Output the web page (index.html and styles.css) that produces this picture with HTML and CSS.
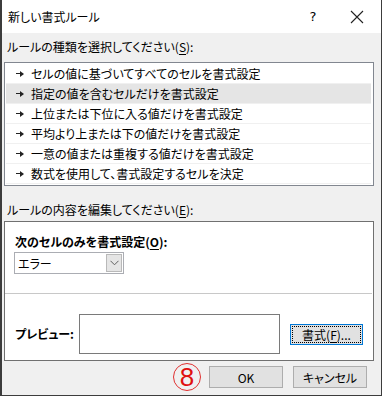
FILE: index.html
```html
<!DOCTYPE html>
<html lang="ja">
<head>
<meta charset="utf-8">
<link rel="stylesheet" href="styles.css">
</head>
<body>
<div class="dialog">
  <div class="titlebar">
    <span class="title">新しい書式ルール</span>
    <span class="help">?</span>
    <span class="close">
      <svg width="14" height="14" viewBox="0 0 14 14"><path d="M1 1 L13 13 M13 1 L1 13" stroke="#222" stroke-width="1.1" fill="none"/></svg>
    </span>
  </div>
  <div class="content">
    <div class="label">ルールの種類を選択してください(<u>S</u>):</div>
    <div class="list">
      <div class="row"><span class="arrow"></span>セルの値に基づいてすべてのセルを書式設定</div>
      <div class="row selected"><span class="arrow"></span>指定の値を含むセルだけを書式設定</div>
      <div class="row"><span class="arrow"></span>上位または下位に入る値だけを書式設定</div>
      <div class="row"><span class="arrow"></span>平均より上または下の値だけを書式設定</div>
      <div class="row"><span class="arrow"></span>一意の値または重複する値だけを書式設定</div>
      <div class="row"><span class="arrow"></span>数式を使用して、書式設定するセルを決定</div>
    </div>
    <div class="label label2">ルールの内容を編集してください(<u>E</u>):</div>
    <div class="panel">
      <div class="panel-top">
        <div class="bold">次のセルのみを書式設定(<u>O</u>):</div>
        <div class="select">
          <span class="select-text">エラー</span>
          <span class="select-btn">
            <svg width="9" height="6" viewBox="0 0 9 6"><path d="M0.5 0.8 L4.5 4.8 L8.5 0.8" stroke="#606060" stroke-width="1" fill="none"/></svg>
          </span>
        </div>
      </div>
      <div class="panel-bottom">
        <div class="bold preview-label">プレビュー:</div>
        <div class="preview-box"></div>
        <div class="btn format"><span class="focus">書式(<u>F</u>)...</span></div>
      </div>
    </div>
    <div class="footer">
      <span class="badge">8</span>
      <div class="btn">OK</div>
      <div class="btn">キャンセル</div>
    </div>
  </div>
</div>
</body>
</html>
```
FILE: styles.css
```css
* { box-sizing: border-box; }
html, body { margin: 0; padding: 0; background: #fff; }
body {
  font-family: "Noto Sans CJK JP", "Noto Sans", sans-serif;
  font-size: 12px;
  font-feature-settings: "palt";
  color: #000;
}
u { text-decoration-thickness: 1px; text-underline-offset: 2px; }
.dialog {
  width: 382px;
  height: 396px;
  border-left: 2px solid #3c3c3c;
  border-right: 1px solid #3c3c3c;
  border-bottom: 1px solid #3c3c3c;
  background: #f0f0f0;
}
.titlebar {
  height: 33px;
  background: #fff;
  display: flex;
  align-items: center;
  padding-left: 6px;
}
.title { flex: 1; font-size: 12px; }
.help { width: 20px; text-align: center; font-family: "DejaVu Sans", sans-serif; font-size: 13px; }
.close { width: 58px; display: flex; justify-content: flex-start; padding-left: 27px; }
.content { padding: 0 7px 0 2px; }
.label { line-height: 16px; padding-left: 3px; margin-top: 6px; }
.list {
  margin-top: 7px;
  border: 1px solid #828790;
  background: #fff;
  padding: 1px 2px 1px 1px;
  height: 124px;
}
.row {
  height: 20px;
  display: flex;
  align-items: center;
  border-bottom: 1px solid #f0f0f0;
  padding-left: 10px;
}
.row.selected { background: #e5e5e5; }
.arrow {
  position: relative;
  width: 8px; height: 6px;
  margin-right: 7px;
}
.arrow::before {
  content: ""; position: absolute; left: 0; top: 2.5px; width: 5px; height: 1px; background: #222;
}
.arrow::after {
  content: ""; position: absolute; left: 4px; top: 0;
  border-left: 4px solid #222; border-top: 3px solid transparent; border-bottom: 3px solid transparent;
}
.label2 { margin-top: 16px; }
.panel {
  margin-top: 3px;
  border: 1px solid #707070;
  background: #fff;
  height: 140px;
}
.panel-top {
  padding: 12px 0 0 10px;
  height: 72px;
  border-bottom: 1px solid #c8c8c8;
  margin-right: 1px;
}
.bold { font-weight: bold; line-height: 16px; }
.select {
  margin-top: 2px;
  margin-left: -1px;
  width: 110px;
  height: 22px;
  border: 1px solid #abadb3;
  display: flex;
  align-items: center;
  justify-content: space-between;
  padding: 0 1px 0 3px;
}
.select-btn {
  width: 16px; height: 18px;
  background: #e5e5e5;
  border: 1px solid #b9b9b9;
  display: flex; align-items: center; justify-content: center;
}
.panel-bottom {
  display: flex;
  align-items: center;
  padding: 20px 0 0 10px;
}
.preview-label { width: 64px; }
.preview-box {
  width: 201px;
  height: 40px;
  border: 1px solid #7a7a7a;
  background: #fff;
  margin-right: 10px;
}
.btn {
  width: 74px;
  height: 22px;
  background: #e1e1e1;
  border: 1px solid #adadad;
  display: flex;
  align-items: center;
  justify-content: center;
}
.btn.format {
  width: 73px;
  height: 21px;
  border: 1px solid #0078d7;
  padding: 1px;
}
.focus {
  flex: 1; align-self: stretch;
  border: 1px dotted #000;
  display: flex; align-items: center; justify-content: center;
}
.footer {
  display: flex;
  justify-content: flex-end;
  align-items: flex-start;
  gap: 10px;
  padding-right: 7px;
  margin-top: 5px;
  height: 22px;
}
.badge {
  width: 28px; height: 28px;
  margin-top: -3px;
  margin-right: -2px;
  border: 1px solid #e03030;
  border-radius: 50%;
  color: #e01010;
  font-family: "Liberation Sans", sans-serif;
  font-size: 26px;
  line-height: 27px;
  text-align: center;
}
```
